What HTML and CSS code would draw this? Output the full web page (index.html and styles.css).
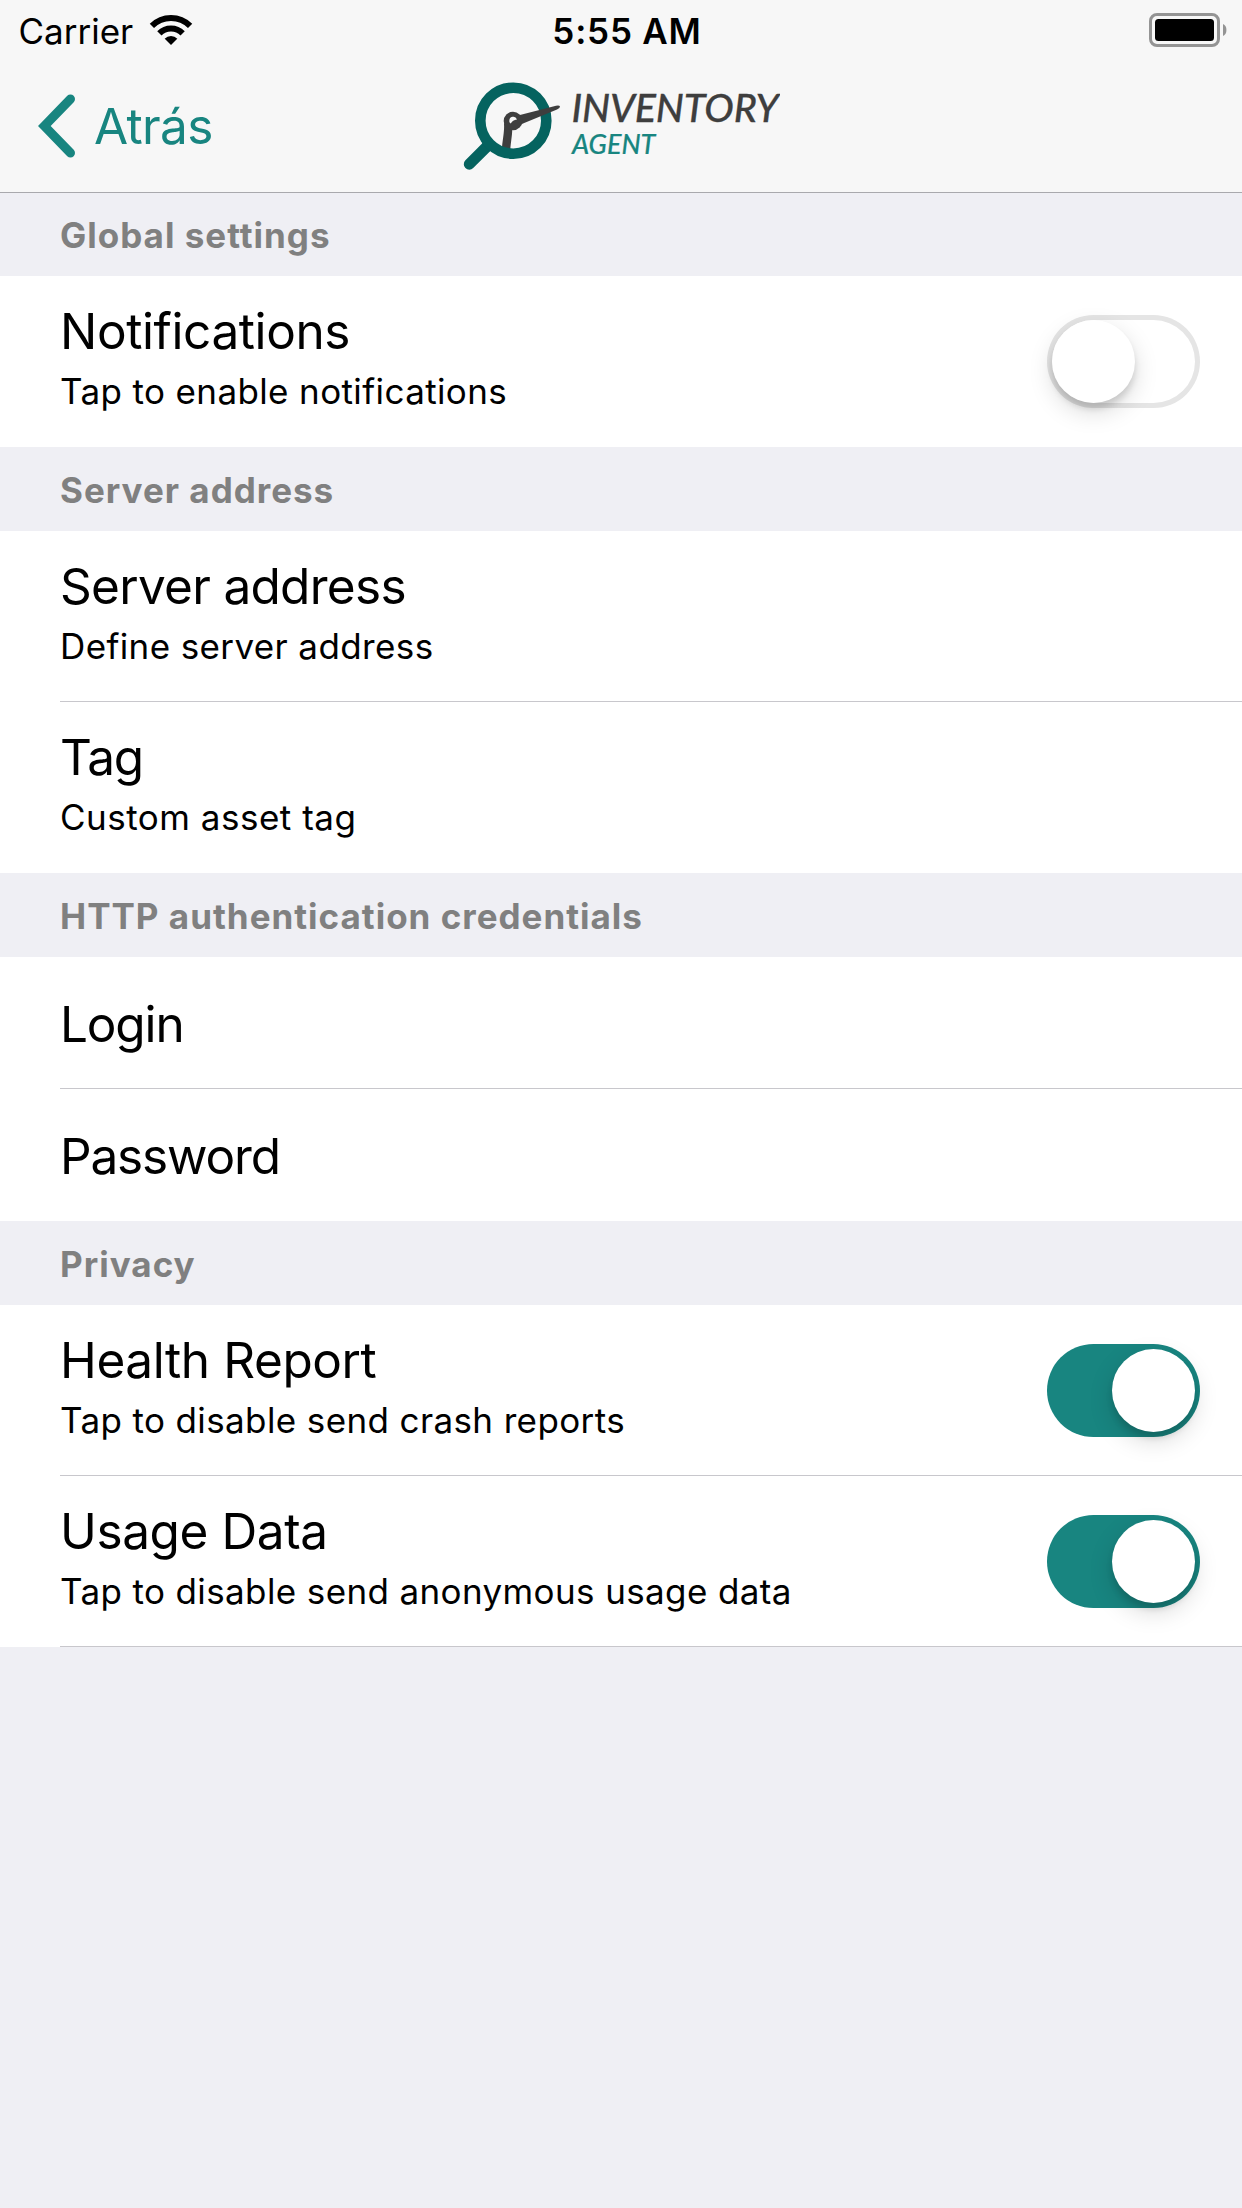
FILE: index.html
```html
<!DOCTYPE html>
<html lang="es">
<head>
<meta charset="utf-8">
<title>Inventory Agent</title>
<link rel="stylesheet" href="styles.css">
</head>
<body>
<header class="top">
  <div class="status">
    <div class="carrier">
      <span>Carrier</span>
      <svg class="wifi" width="44" height="34" viewBox="0 0 44 34">
        <defs><clipPath id="wedge"><path d="M22 33L-10 1V-10H54V1Z"/></clipPath></defs>
        <g clip-path="url(#wedge)" fill="none" stroke="#000">
          <circle cx="22" cy="33" r="27" stroke-width="6"/>
          <circle cx="22" cy="33" r="16.5" stroke-width="6"/>
          <circle cx="22" cy="33" r="9" fill="#000" stroke="none"/>
        </g>
      </svg>
    </div>
    <div class="clock">5:55 AM</div>
    <svg class="battery" width="80" height="34" viewBox="0 0 80 34">
      <rect x="1.5" y="1.5" width="68" height="31" rx="6.5" fill="none" stroke="#949494" stroke-width="3"/>
      <rect x="6" y="6" width="59" height="22" rx="3.5"/>
      <path d="M74 11C78.6 12.500 78.600 21.500 74 23Z" fill="#949494"/>
    </svg>
  </div>
  <nav class="navbar">
    <a class="back">
      <svg width="40" height="66" viewBox="0 0 40 66"><path d="M34.500 6L8.300 33L34.500 60" fill="none" stroke="#188580" stroke-width="9" stroke-linecap="round" stroke-linejoin="miter"/></svg>
      <span>Atrás</span>
    </a>
    <svg class="logo" width="320" height="96" viewBox="0 0 320 96">
      <path d="M29 69.500L9.300 89.200" stroke="#05635f" stroke-width="11" stroke-linecap="round"/>
      <path d="M22 68.500Q26 67 26 63L36 73Q31 73 30 76.500Z" fill="#05635f"/>
      <path d="M44 48C44.500 56 43 62 42 72.200L50.300 74.500C51 66 52 62 52.300 54Z" fill="#3e3e3e"/>
      <circle cx="53.300" cy="45.700" r="33" fill="none" stroke="#05635f" stroke-width="10.600"/>
      <path d="M57 40.800L96 30.700Q99.500 29.900 100 31.500Q100.200 33.200 97 34.500L63 48.500Q58 51 54 54.500Z" fill="#3e3e3e"/>
      <circle cx="53" cy="46" r="9.300" fill="#3e3e3e"/>
      <path d="M49.300 46.500A4 4.500 0 0 1 57 44.500Q52.500 45 50.800 48.500Q49.500 48 49.300 46.500Z" fill="#f7f7f7"/>
      <text class="logo-name" x="111.500" y="47">INVENTORY</text>
      <text class="logo-sub" x="112" y="79">AGENT</text>
    </svg>
  </nav>
</header>
<main>
  <h2>Global settings</h2>
  <section>
    <div class="row">
      <div class="text"><div class="title loose">Notifications</div><div class="sub">Tap to enable notifications</div></div>
      <div class="switch"><i class="knob"></i></div>
    </div>
  </section>
  <h2>Server address</h2>
  <section>
    <div class="row">
      <div class="text"><div class="title">Server address</div><div class="sub">Define server address</div></div>
    </div>
    <div class="row">
      <div class="text"><div class="title tight">Tag</div><div class="sub wide">Custom asset tag</div></div>
    </div>
  </section>
  <h2>HTTP authentication credentials</h2>
  <section>
    <div class="row single"><div class="title tight">Login</div></div>
    <div class="row single"><div class="title tight">Password</div></div>
  </section>
  <h2>Privacy</h2>
  <section class="last">
    <div class="row">
      <div class="text"><div class="title loose">Health Report</div><div class="sub">Tap to disable send crash reports</div></div>
      <div class="switch on"><i class="knob"></i></div>
    </div>
    <div class="row">
      <div class="text"><div class="title loose">Usage Data</div><div class="sub">Tap to disable send anonymous usage data</div></div>
      <div class="switch on"><i class="knob"></i></div>
    </div>
  </section>
</main>
</body>
</html>
```
FILE: styles.css
```css
* { box-sizing: border-box; }
body {
  margin: 0;
  min-height: 2208px;
  background: #efeff4;
  color: #000;
  font-family: Inter, "Liberation Sans", sans-serif;
}
svg { display: block; flex: none; }

/* Status bar and navigation bar */
.top {
  position: relative;
  height: 193px;
  margin-bottom: -1px;
  background: #f7f7f7;
  border-bottom: 1px solid #a9a9ad;
}
.status {
  display: grid;
  grid-template-columns: 1fr auto 1fr;
  height: 60px;
  font-size: 35px;
  line-height: 62px;
}
.carrier { display: flex; padding-left: 18.5px; }
.wifi { margin: 12px 0 0 16px; }
.clock { margin-left: 12px; font-weight: 600; letter-spacing: 0.79px; }
.battery { justify-self: end; margin: 13px 13px 0 0; }

.navbar {
  display: grid;
  grid-template-columns: 460px 320px 1fr;
  height: 132px;
}
.back {
  display: flex;
  align-items: center;
  gap: 18px;
  padding-left: 36px;
  color: #188580;
  font-size: 49.5px;
  line-height: 60px;
  letter-spacing: -0.63px;
}
.logo { margin-top: 15px; }
.logo-name, .logo-sub { font-family: Lato, "Open Sans", sans-serif; font-style: italic; }
.logo-name { font-size: 39.5px; font-weight: 500; fill: #3e3e3e; stroke: #3e3e3e; stroke-width: 0.3px; letter-spacing: -0.2px; }
.logo-sub { font-size: 27px; font-weight: 500; fill: #188580; stroke: #188580; stroke-width: 0.2px; }

/* Grouped table */
h2 {
  height: 84px;
  margin: 0;
  padding: 2px 60px 0;
  color: #808080;
  font-size: 35px;
  font-weight: 700;
  line-height: 82px;
  letter-spacing: 1px;
}
section { background: #fff; }
.row {
  display: flex;
  justify-content: space-between;
  height: 171px;
  padding: 25px 42px 0 60px;
}
.row.single { height: 132px; padding-top: 37px; }
.row:not(:last-child) { margin-bottom: -1px; }
.row + .row {
  height: 172px;
  padding-top: 26px;
  background: linear-gradient(#c8c7cc, #c8c7cc) 60px 0 / 100% 1px no-repeat;
}
.row.single + .row.single { height: 133px; padding-top: 38px; }
.last .row:last-child {
  background:
    linear-gradient(#c8c7cc, #c8c7cc) 60px 0 / 100% 1px no-repeat,
    linear-gradient(#c8c7cc, #c8c7cc) 60px 100% / 100% 1px no-repeat;
}
.title { font-size: 49.5px; line-height: 60px; letter-spacing: -0.7px; }
.title.tight { letter-spacing: -1.15px; }
.title.loose { letter-spacing: -0.4px; }
.sub { margin-top: 9px; font-size: 35px; line-height: 42px; letter-spacing: 0.38px; }
.sub.wide { letter-spacing: 0.5px; }

.switch {
  width: 153px;
  height: 93px;
  margin-top: 14px;
  padding: 5px;
  border-radius: 47px;
  background: #fff;
  box-shadow: inset 0 0 0 5px #e5e5e5;
}
.switch.on { background: #188580; box-shadow: none; }
.knob {
  display: block;
  width: 83px;
  height: 83px;
  border-radius: 50%;
  background: #fff;
  box-shadow: 0 9px 24px rgba(0, 0, 0, 0.15), 0 6px 6px rgba(0, 0, 0, 0.12);
}
.on .knob { margin-left: auto; }
```
